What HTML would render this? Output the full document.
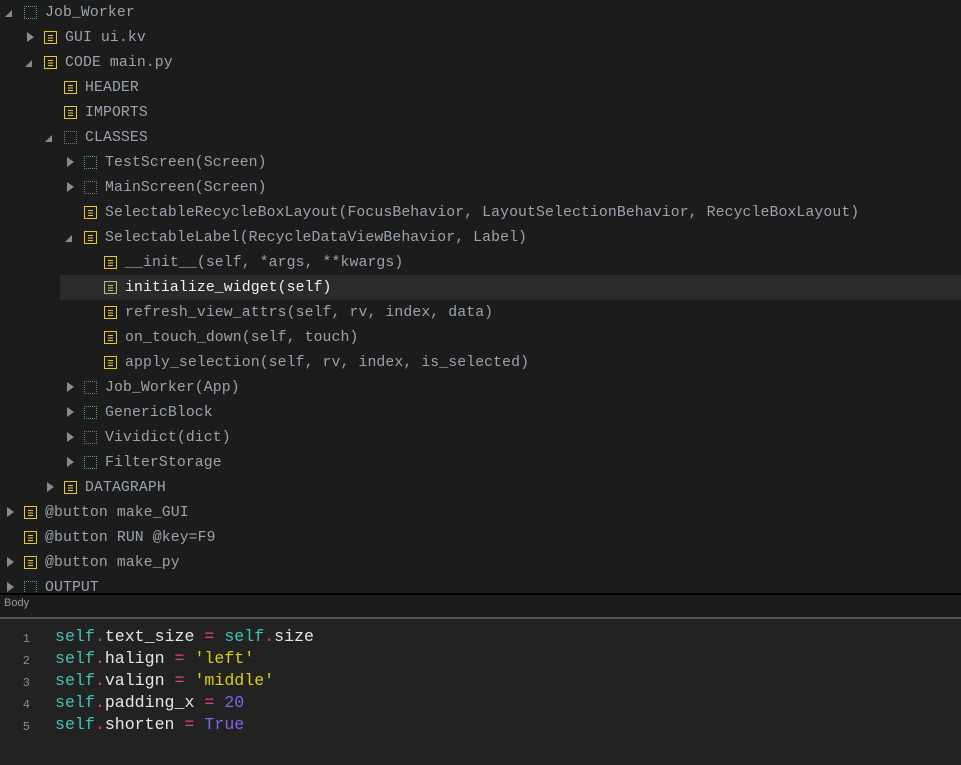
<!DOCTYPE html>
<html><head><meta charset="utf-8"><style>
body{margin:0;width:961px;height:763px;background:#1c1c1c;overflow:hidden;position:relative;font-family:"Liberation Mono",monospace}
.tree{position:absolute;left:0;top:0;width:961px;height:593px;overflow:hidden}
.r{position:absolute;left:0;width:961px;height:25px;font-size:14.8px;letter-spacing:0.1px;line-height:25px;color:#9aa3ad;white-space:pre}
.r.sel{background:#2b2b2b;color:#f2f2f2}
.ar{position:absolute;top:7px;width:0;height:0}
.ar.rt{border-top:5.5px solid transparent;border-bottom:5.5px solid transparent;border-left:7px solid #8a8a8a;top:7px}
.ar.dn{border-left:7px solid transparent;border-bottom:7px solid #8a8a8a;top:10px}
.ic{position:absolute;top:6px;width:13px;height:13px;box-sizing:border-box}
.note{border:1.5px solid #e8c828;}
.note::before{content:"";position:absolute;left:2.5px;top:3px;width:5px;height:1.3px;background:#e8c828;box-shadow:0 2.5px 0 #e8c828,0 5px 0 #e8c828}
.sel .note{border-color:#b8c070}.sel .note::before{background:#b8c070;box-shadow:0 2.5px 0 #b8c070,0 5px 0 #b8c070}
.dg{border:1.3px dotted #40b060}
.dy{border:1.3px dotted #787878}
.t{position:absolute;top:1px}
.div{position:absolute;left:0;top:593px;width:961px;height:2px;background:#000}
.body{position:absolute;left:4px;top:597px;font:11px "Liberation Sans",sans-serif;color:#9a9a9a}
.ed{position:absolute;left:0;top:617px;width:961px;height:146px;background:#222;border-top:2px solid #555}
.ln{position:absolute;left:0;width:30px;text-align:right;font-size:12px;color:#8a8a8a}
.cl{position:absolute;left:55px;font-size:16.6px;color:#e6e6e6;white-space:pre}
.s{color:#3ec4b4}.p{color:#e0408a}.q{color:#d8d010}.n{color:#8462e6}
</style></head><body>
<div class="tree">
<div class="r" style="top:0"><span class="ar dn" style="left:5px"></span><span class="ic dg" style="left:24px"></span><span class="t" style="left:45px">Job_Worker</span></div>
<div class="r" style="top:25px"><span class="ar rt" style="left:27px"></span><span class="ic note" style="left:44px"></span><span class="t" style="left:65px">GUI ui.kv</span></div>
<div class="r" style="top:50px"><span class="ar dn" style="left:25px"></span><span class="ic note" style="left:44px"></span><span class="t" style="left:65px">CODE main.py</span></div>
<div class="r" style="top:75px"><span class="ic note" style="left:64px"></span><span class="t" style="left:85px">HEADER</span></div>
<div class="r" style="top:100px"><span class="ic note" style="left:64px"></span><span class="t" style="left:85px">IMPORTS</span></div>
<div class="r" style="top:125px"><span class="ar dn" style="left:45px"></span><span class="ic dy" style="left:64px"></span><span class="t" style="left:85px">CLASSES</span></div>
<div class="r" style="top:150px"><span class="ar rt" style="left:67px"></span><span class="ic dg" style="left:84px"></span><span class="t" style="left:105px">TestScreen(Screen)</span></div>
<div class="r" style="top:175px"><span class="ar rt" style="left:67px"></span><span class="ic dy" style="left:84px"></span><span class="t" style="left:105px">MainScreen(Screen)</span></div>
<div class="r" style="top:200px"><span class="ic note" style="left:84px"></span><span class="t" style="left:105px">SelectableRecycleBoxLayout(FocusBehavior, LayoutSelectionBehavior, RecycleBoxLayout)</span></div>
<div class="r" style="top:225px"><span class="ar dn" style="left:65px"></span><span class="ic note" style="left:84px"></span><span class="t" style="left:105px">SelectableLabel(RecycleDataViewBehavior, Label)</span></div>
<div class="r" style="top:250px"><span class="ic note" style="left:104px"></span><span class="t" style="left:125px">__init__(self, *args, **kwargs)</span></div>
<div class="r sel" style="top:275px;left:60px"><span class="ic note" style="left:44px"></span><span class="t" style="left:65px">initialize_widget(self)</span></div>
<div class="r" style="top:300px"><span class="ic note" style="left:104px"></span><span class="t" style="left:125px">refresh_view_attrs(self, rv, index, data)</span></div>
<div class="r" style="top:325px"><span class="ic note" style="left:104px"></span><span class="t" style="left:125px">on_touch_down(self, touch)</span></div>
<div class="r" style="top:350px"><span class="ic note" style="left:104px"></span><span class="t" style="left:125px">apply_selection(self, rv, index, is_selected)</span></div>
<div class="r" style="top:375px"><span class="ar rt" style="left:67px"></span><span class="ic dy" style="left:84px"></span><span class="t" style="left:105px">Job_Worker(App)</span></div>
<div class="r" style="top:400px"><span class="ar rt" style="left:67px"></span><span class="ic dg" style="left:84px"></span><span class="t" style="left:105px">GenericBlock</span></div>
<div class="r" style="top:425px"><span class="ar rt" style="left:67px"></span><span class="ic dy" style="left:84px"></span><span class="t" style="left:105px">Vividict(dict)</span></div>
<div class="r" style="top:450px"><span class="ar rt" style="left:67px"></span><span class="ic dg" style="left:84px"></span><span class="t" style="left:105px">FilterStorage</span></div>
<div class="r" style="top:475px"><span class="ar rt" style="left:47px"></span><span class="ic note" style="left:64px"></span><span class="t" style="left:85px">DATAGRAPH</span></div>
<div class="r" style="top:500px"><span class="ar rt" style="left:7px"></span><span class="ic note" style="left:24px"></span><span class="t" style="left:45px">@button make_GUI</span></div>
<div class="r" style="top:525px"><span class="ic note" style="left:24px"></span><span class="t" style="left:45px">@button RUN @key=F9</span></div>
<div class="r" style="top:550px"><span class="ar rt" style="left:7px"></span><span class="ic note" style="left:24px"></span><span class="t" style="left:45px">@button make_py</span></div>
<div class="r" style="top:575px"><span class="ar rt" style="left:7px"></span><span class="ic dg" style="left:24px"></span><span class="t" style="left:45px">OUTPUT</span></div>
</div>
<div class="div"></div>
<div class="body">Body</div>
<div class="ed">
<div class="ln" style="top:13px">1</div><div class="cl" style="top:8px"><span class="s">self</span><span class="p">.</span>text_size <span class="p">=</span> <span class="s">self</span><span class="p">.</span>size</div>
<div class="ln" style="top:35px">2</div><div class="cl" style="top:30px"><span class="s">self</span><span class="p">.</span>halign <span class="p">=</span> <span class="q">'left'</span></div>
<div class="ln" style="top:57px">3</div><div class="cl" style="top:52px"><span class="s">self</span><span class="p">.</span>valign <span class="p">=</span> <span class="q">'middle'</span></div>
<div class="ln" style="top:79px">4</div><div class="cl" style="top:74px"><span class="s">self</span><span class="p">.</span>padding_x <span class="p">=</span> <span class="n">20</span></div>
<div class="ln" style="top:101px">5</div><div class="cl" style="top:96px"><span class="s">self</span><span class="p">.</span>shorten <span class="p">=</span> <span class="n">True</span></div>
</div>
</body></html>
